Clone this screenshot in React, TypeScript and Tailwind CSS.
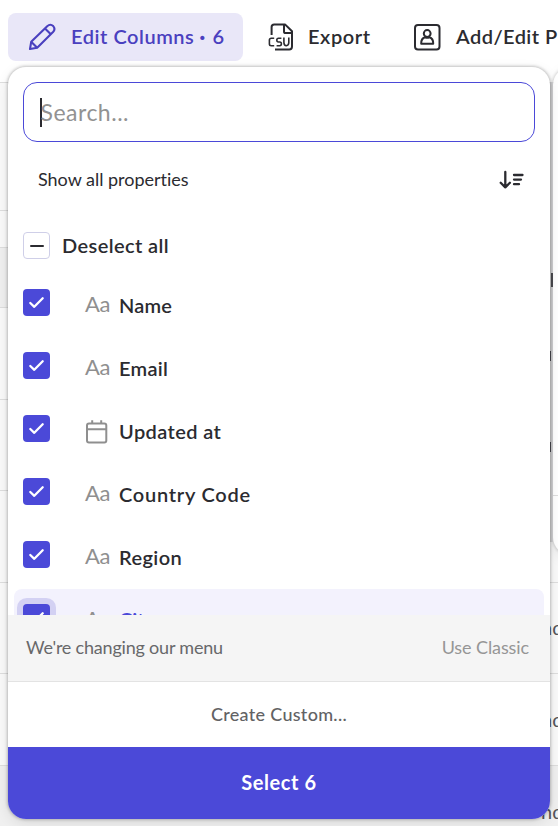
import React from "react";

function Check() {
  return (
    <svg width="27" height="27" viewBox="0 0 27 27" fill="none" stroke="#fff" strokeWidth="2.3" strokeLinecap="round" strokeLinejoin="round">
      <path d="M7.3 14 11.3 17.8 19.7 9.3" />
    </svg>
  );
}

function Calendar() {
  return (
    <svg className="mt-[5px]" width="24" height="26" viewBox="0 0 24 26" fill="none" stroke="#8f8f8f" strokeWidth="2">
      <rect x="2" y="4.5" width="19.3" height="19" rx="2" />
      <path d="M2 10.2H21.3M7.2 1.2V4.5M16.2 1.2V4.5" />
    </svg>
  );
}

const items = [
  { label: "Name", spacing: "tracking-[0.2px]" },
  { label: "Email", spacing: "tracking-[0.3px]" },
  { label: "Updated at", spacing: "tracking-[0.4px]", date: true },
  { label: "Country Code", spacing: "tracking-[0.75px]" },
  { label: "Region", spacing: "tracking-[0.4px]" },
];

const rows = [
  { box: "h-[128px] bg-[#fafafa]", text: "" },
  { box: "h-[37px] bg-[#fafafa]", text: "" },
  { box: "h-[60px] bg-[#f0f0f0]", text: "" },
  { box: "h-[92px] bg-[#fafafa]", text: "" },
  { box: "h-[91px] bg-[#fafafa]", text: "" },
  { box: "h-[92px] bg-[#fafafa]", text: "" },
  { box: "h-[91px] bg-[#fafafa]", text: "nd" },
  { box: "h-[92px] bg-[#fafafa]", text: "nd" },
  { box: "h-[92px] bg-[#f0f0f0]", text: "nd" },
];

export default function App() {
  return (
    <div className="relative h-[826px] w-[558px] overflow-hidden bg-white font-[Lato,sans-serif] text-[#2b2b30]">
      <header className="flex h-[82px] items-start pt-[13px] pl-2 text-[20px] leading-[48px] font-semibold whitespace-nowrap">
        <button className="flex h-12 w-[235px] shrink-0 items-center rounded-lg bg-[#e9e7f8] pl-5 text-[#4a40bf]">
          <svg className="shrink-0" width="28" height="28" viewBox="0 0 28 28" fill="none" stroke="currentColor" strokeWidth="2.1" strokeLinejoin="round">
            <path d="M2 26 3.2 18.8 19.2 3.2Q22.3.4 25.2 3.1 27.8 6 25 9L9.2 24.8Z" />
            <path d="M17 5.5 22.8 11.2M3.2 18.8 9.2 24.8" />
          </svg>
          <span className="-mt-0.5 ml-[15px] tracking-[0.55px]">Edit Columns</span>
          <span className="-mt-0.5 ml-[5px] w-[6px] text-center text-[20px] font-black">·</span>
          <span className="-mt-0.5 ml-[7px]">6</span>
        </button>
        <button className="ml-[25px] flex h-12 shrink-0 items-center">
          <svg width="26" height="28" viewBox="0 0 26 28" fill="none" stroke="currentColor" strokeWidth="2" strokeLinejoin="round">
            <path d="M3.6 12V4Q3.6 1.4 6.2 1.4H17L24 8.3V23.5Q24 26.4 21.2 26.4H7" />
            <path d="M16 1.4V8.4Q16 10 17.6 10H24" />
            <path d="M6.2 15.3H3.3Q1.4 15.3 1.4 17V21Q1.4 22.7 3.3 22.7H6.2M13.4 15.3H10.5Q8.8 15.3 8.8 17 8.8 19 10.5 19H11.8Q13.4 19 13.4 20.8 13.4 22.7 11.8 22.7H8.6M15.9 14.4V19.5Q16 22.7 18.3 22.7 20.8 22.4 20.8 19.5V14.4" strokeWidth="1.6" />
          </svg>
          <span className="-mt-0.5 ml-[14px] w-[65px] text-left tracking-[0.6px]">Export</span>
        </button>
        <button className="ml-[40px] flex h-12 shrink-0 items-center">
          <svg width="28" height="28" viewBox="0 0 28 28" fill="none" stroke="currentColor" strokeWidth="2">
            <rect x="2" y="2" width="24.5" height="24.5" rx="3" />
            <circle cx="14.2" cy="10.5" r="3.4" />
            <path d="M8.2 20.7Q8 15.6 12 14.3 14.2 15.2 16.4 14.3 20.4 15.6 20.2 20.7Z" strokeLinejoin="round" />
          </svg>
          <span className="-mt-0.5 ml-[15px] tracking-[0.45px]">Add/Edit P</span>
        </button>
      </header>

      <main>
        {rows.map((row, i) => (
          <div key={i} className={`${row.box} flex items-center justify-end overflow-hidden border-t border-[#dedede] text-[20px] text-[#55555a]`}>
            <span className="-mt-0.5 w-[17px] whitespace-nowrap">{row.text}</span>
          </div>
        ))}
      </main>

      <div className="absolute top-[67px] left-[553px] h-[488px] w-[200px] rounded-[18px] bg-white shadow-[0_0_3px_1px_#00000024,0_4px_14px_#00000014]">
        <div className="mt-[428px] h-px bg-[#dedede]" />
      </div>
      <div className="absolute top-[82px] left-[550px] h-[460px] w-[3px] overflow-hidden bg-[#d0d0d2]">
        <div className="mt-[191px] ml-px h-[14px] bg-[#4a4a50]" />
        <div className="mt-[64px] h-[10px] w-px bg-[#4a4a50]" />
        <div className="mt-[81px] h-[10px] w-px bg-[#4a4a50]" />
      </div>

      <section className="absolute top-[67px] left-2 flex h-[752px] w-[542px] flex-col overflow-hidden rounded-[18px] bg-white shadow-[0_0_3px_1px_#00000038,0_4px_14px_#00000018]">
        <div className="mx-[15px] mt-[15px] flex h-[60px] shrink-0 items-center rounded-[14px] border border-[#4b49d8] pl-4">
          <span className="h-[29px] w-[1.5px] bg-[#2b2b30]" />
          <span className="-ml-px text-[23px] tracking-[0.5px] text-[#929292]">Search...</span>
        </div>
        <div className="flex h-[75px] shrink-0 items-center justify-between pr-[26px] pl-[30px] text-[18px]">
          <span className="tracking-[-0.02px]">Show all properties</span>
          <svg width="25" height="20" viewBox="0 0 25 20" fill="none" stroke="currentColor" strokeWidth="2.3" strokeLinecap="round" strokeLinejoin="round">
            <path d="M6.3 2V17.4M1.7 12.8 6.3 17.4 10.9 12.8M15 5H23.5M15 9.6H22M15 14.2H20" />
          </svg>
        </div>
        <div className="flex h-[398px] shrink-0 flex-col overflow-hidden">
          <div className="flex h-[57px] shrink-0 items-center pl-[15px]">
            <span className="flex size-[27px] items-center justify-center rounded-[4px] border border-[#cfcfe8]">
              <span className="h-[2px] w-[14px] rounded bg-[#2b2b30]" />
            </span>
            <span className="-mt-0.5 ml-3 text-[20px] font-semibold tracking-[0.4px]">Deselect all</span>
          </div>
          {items.map((item) => (
            <div key={item.label} className="flex h-[63px] shrink-0 items-center pl-[15px]">
              <span className="mb-[7px] size-[27px] rounded-[4px] bg-[#4b49d8]"><Check /></span>
              <span className="-mt-1 ml-[35px] flex w-[34px] text-[22px] tracking-[-0.5px] text-[#8f8f8f]">{item.date ? <Calendar /> : "Aa"}</span>
              <span className={`-mt-0.5 text-[20px] font-semibold ${item.spacing}`}>{item.label}</span>
            </div>
          ))}
          <div className="mx-[6px] flex h-[63px] shrink-0 items-center rounded-lg bg-[#f3f2fd] pl-[9px]">
            <span className="mb-[7px] size-[27px] rounded-[4px] bg-[#4b49d8] shadow-[0_0_0_6px_#d3d1f3]"><Check /></span>
            <span className="-mt-1 ml-[35px] w-[34px] text-[22px] tracking-[-0.5px] text-[#8f8f8f]">Aa</span>
            <span className="-mt-1 text-[20px] font-semibold text-[#4b49d8]">City</span>
          </div>
        </div>
        <div className="flex h-[67px] shrink-0 items-center justify-between border-b border-[#e3e3e3] bg-[#f5f5f5] pr-[21px] pb-px pl-[18px] text-[18px]">
          <span className="tracking-[-0.2px] text-[#68686a]">We're changing our menu</span>
          <span className="tracking-[-0.1px] text-[#969696]">Use Classic</span>
        </div>
        <button className="h-[65px] shrink-0 text-[18px] font-medium tracking-[0.3px] text-[#626264]">Create Custom...</button>
        <button className="h-[72px] shrink-0 bg-[#4b49d8] pb-[3px] text-[20px] font-bold tracking-[0.6px] text-white">Select 6</button>
      </section>
    </div>
  );
}
